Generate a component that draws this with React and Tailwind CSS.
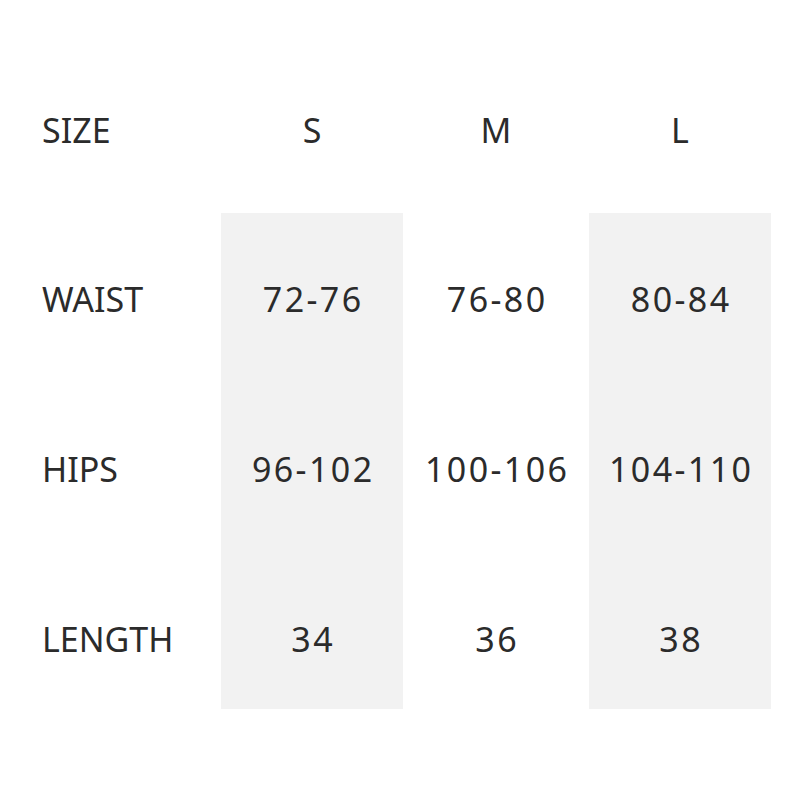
export default function App() {
  const font = { fontFamily: '"Noto Sans", "Liberation Sans", sans-serif' };
  const cols = [
    { size: "S", vals: ["72-76", "96-102", "34"], bg: "bg-[#f2f2f2]", w: "w-[182px]" },
    { size: "M", vals: ["76-80", "100-106", "36"], bg: "bg-white", w: "w-[186px]" },
    { size: "L", vals: ["80-84", "104-110", "38"], bg: "bg-[#f2f2f2]", w: "w-[182px]" },
  ];
  const labels = ["WAIST", "HIPS", "LENGTH"];
  return (
    <div className="w-[800px] h-[800px] bg-white text-[#2b2b2b] text-[34px] leading-[40px]" style={font}>
      <div className="flex pt-[110px]">
        <div className="w-[221px] pl-[42px]">SIZE</div>
        {cols.map((c) => (
          <div key={c.size} className={`${c.w} text-center`}>{c.size}</div>
        ))}
      </div>
      <div className="flex mt-[63px]">
        <div className="w-[221px] pl-[42px] flex flex-col gap-[130px] pt-[66px] pb-[50px]">
          {labels.map((l) => (
            <div key={l}>{l}</div>
          ))}
        </div>
        {cols.map((c) => (
          <div key={c.size} className={`${c.w} ${c.bg} flex flex-col gap-[130px] pt-[66px] pb-[50px] text-center`}>
            {c.vals.map((v) => (
              <div key={v} className="tracking-[2.4px] pl-[2.4px]">{v}</div>
            ))}
          </div>
        ))}
      </div>
    </div>
  );
}
